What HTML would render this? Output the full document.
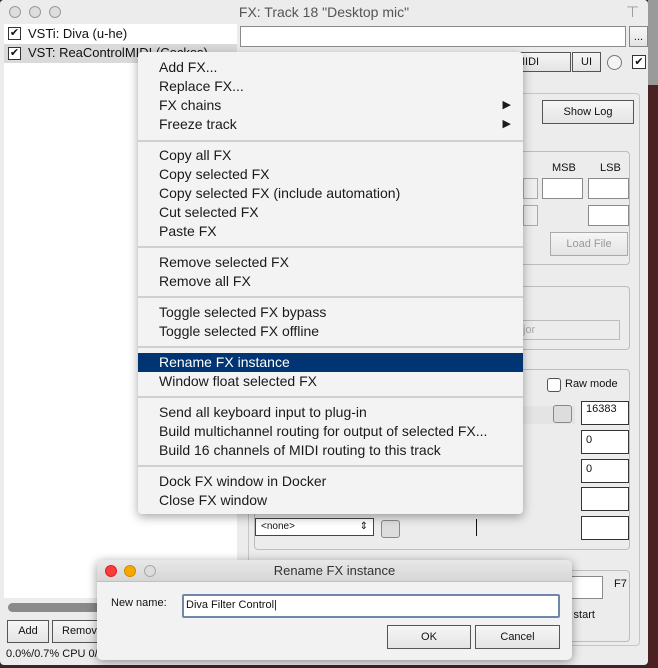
<!DOCTYPE html>
<html><head><style>
*{box-sizing:border-box;margin:0;padding:0}
body{width:658px;height:668px;overflow:hidden;background:#3a2626;font-family:"Liberation Sans",sans-serif;font-size:12px;color:#111;position:relative}
.a{position:absolute}
.win{left:0;top:0;width:648px;height:665px;background:#ececec;border-radius:4px;overflow:hidden}
.tl{width:12px;height:12px;border-radius:50%;border:1px solid #9a9a9a;background:#ddd;top:6px}
.inp{background:#fff;border:1px solid #8a8a8a}
.btn{background:linear-gradient(#f6f6f6,#e4e4e4);border:1px solid #555;text-align:center;font-size:11px}
.grp{border:1px solid #bdbdbd;border-radius:4px}
.menu{left:138px;top:52px;width:385px;height:462px;background:#f3f3f3;border-radius:4px;box-shadow:0 3px 10px rgba(0,0,0,.35);font-size:14px;color:#1a1a1a}
.mi{position:absolute;left:21px;height:19px;line-height:19px;white-space:nowrap}
.sep{position:absolute;left:0;width:385px;height:2px;background:#d0d0d0}
.arr{position:absolute;right:12px;font-size:11px}
</style></head><body>
<div class="a" style="left:648px;top:0;width:10px;height:85px;background:#9a9a9a"></div>
<div class="a" style="left:648px;top:85px;width:10px;height:583px;background:#4a2222"></div>
<div class="a win">
 <div class="a" style="left:0;top:0;width:648px;height:24px;background:#ececec"></div>
 <div class="a tl" style="left:9px"></div><div class="a tl" style="left:29px"></div><div class="a tl" style="left:49px"></div>
 <div class="a" style="left:0;top:4px;width:648px;text-align:center;font-size:14px;color:#555">FX: Track 18 "Desktop mic"</div>
 <div class="a" style="left:626px;top:3px;color:#999;font-size:15px">⊤</div>
 <div class="a" style="left:4px;top:24px;width:233px;height:574px;background:#fff"></div>
 <div class="a" style="left:4px;top:44px;width:233px;height:19px;background:#dadada"></div>
 <div class="a" style="left:8px;top:27px;width:13px;height:13px;border:1px solid #333;background:#fff;font-size:11px;line-height:11px;text-align:center">✔</div>
 <div class="a" style="left:28px;top:26px;font-size:13px">VSTi: Diva (u-he)</div>
 <div class="a" style="left:8px;top:47px;width:13px;height:13px;border:1px solid #333;background:#fff;font-size:11px;line-height:11px;text-align:center">✔</div>
 <div class="a" style="left:28px;top:45px;font-size:13px">VST: ReaControlMIDI (Cockos)</div>
 <div class="a" style="left:8px;top:603px;width:130px;height:9px;border-radius:5px;background:#8a8a8a"></div>
 <div class="a btn" style="left:7px;top:620px;width:42px;height:23px;line-height:21px">Add</div>
 <div class="a btn" style="left:52px;top:620px;width:60px;height:23px;line-height:21px;text-align:left;padding-left:9px">Remove</div>
 <div class="a" style="left:6px;top:648px;font-size:11px">0.0%/0.7% CPU 0/0 spls</div>
 <div class="a inp" style="left:240px;top:26px;width:386px;height:21px"></div>
 <div class="a btn" style="left:629px;top:26px;width:19px;height:21px;border-color:#888;line-height:20px">...</div>
 <div class="a btn" style="left:243px;top:52px;width:158px;height:20px"></div>
 <div class="a btn" style="left:405px;top:52px;width:19px;height:20px"></div>
 <div class="a btn" style="left:429px;top:52px;width:51px;height:20px"></div>
 <div class="a btn" style="left:484px;top:52px;width:87px;height:20px;line-height:18px">MIDI</div>
 <div class="a btn" style="left:572px;top:52px;width:29px;height:20px;line-height:18px">UI</div>
 <div class="a" style="left:607px;top:55px;width:15px;height:15px;border-radius:50%;border:1px solid #777;background:#f4f4f4"></div>
 <div class="a" style="left:632px;top:55px;width:14px;height:14px;border:1px solid #333;background:#fff;font-size:11px;line-height:12px;text-align:center">✔</div>
 <div class="a grp" style="left:248px;top:93px;width:392px;height:553px;border-color:#c6c6c6"></div>
 <div class="a btn" style="left:542px;top:100px;width:92px;height:24px;line-height:22px">Show Log</div>
 <div class="a grp" style="left:256px;top:151px;width:374px;height:114px"></div>
 <div class="a" style="left:552px;top:162px;font-size:11px">MSB</div><div class="a" style="left:600px;top:162px;font-size:11px">LSB</div>
 <div class="a inp" style="left:542px;top:178px;width:41px;height:21px"></div>
 <div class="a inp" style="left:588px;top:178px;width:41px;height:21px"></div>
 <div class="a inp" style="left:588px;top:205px;width:41px;height:21px"></div>
 <div class="a" style="left:523px;top:178px;width:15px;height:21px;border:1px solid #aaa;background:#eee"></div>
 <div class="a" style="left:523px;top:205px;width:15px;height:21px;border:1px solid #aaa;background:#eee"></div>
 <div class="a btn" style="left:550px;top:232px;width:78px;height:24px;line-height:22px;border-color:#aaa;color:#999">Load File</div>
 <div class="a grp" style="left:256px;top:286px;width:374px;height:64px"></div>
 <div class="a" style="left:500px;top:320px;width:120px;height:20px;border:1px solid #bbb;color:#aaa;font-size:11px;line-height:18px;padding-left:22px">jor</div>
 <div class="a grp" style="left:254px;top:369px;width:376px;height:181px"></div>
 <div class="a" style="left:547px;top:378px;width:14px;height:14px;border:1px solid #555;border-radius:3px;background:#fff"></div>
 <div class="a" style="left:565px;top:378px;font-size:11px">Raw mode</div>
 <div class="a" style="left:380px;top:406px;width:195px;height:18px;background:#e4e4e4"></div>
 <div class="a" style="left:553px;top:405px;width:19px;height:18px;border:1px solid #888;border-radius:3px;background:#ddd"></div>
 <div class="a inp" style="left:581px;top:401px;width:48px;height:24px;border-color:#333;font-size:11px;padding:1px 4px">16383</div>
 <div class="a inp" style="left:581px;top:430px;width:48px;height:24px;border-color:#333;font-size:11px;padding:3px 4px">0</div>
 <div class="a inp" style="left:581px;top:459px;width:48px;height:24px;border-color:#333;font-size:11px;padding:3px 4px">0</div>
 <div class="a inp" style="left:581px;top:487px;width:48px;height:24px;border-color:#333"></div>
 <div class="a inp" style="left:581px;top:516px;width:48px;height:24px;border-color:#333"></div>
 <div class="a inp" style="left:255px;top:518px;width:119px;height:18px;border-color:#444;font-size:10px;padding:2px 5px">&lt;none&gt;<span style="float:right">⇕</span></div>
 <div class="a" style="left:381px;top:520px;width:19px;height:18px;border:1px solid #888;border-radius:3px;background:#ddd"></div>
 <div class="a" style="left:476px;top:519px;width:1px;height:17px;background:#111"></div>
 <div class="a grp" style="left:254px;top:570px;width:376px;height:72px"></div>
 <div class="a inp" style="left:560px;top:576px;width:43px;height:23px"></div>
 <div class="a" style="left:614px;top:578px;font-size:11px">F7</div>
 <div class="a" style="left:565px;top:609px;font-size:11px">k start</div>
</div>
<div class="a menu">
 <div class="mi" style="top:6px">Add FX...</div>
 <div class="mi" style="top:25px">Replace FX...</div>
 <div class="mi" style="top:44px;width:352px">FX chains<span class="arr" style="right:0">▶</span></div>
 <div class="mi" style="top:63px;width:352px">Freeze track<span class="arr" style="right:0">▶</span></div>
 <div class="sep" style="top:88px"></div>
 <div class="mi" style="top:94px">Copy all FX</div>
 <div class="mi" style="top:113px">Copy selected FX</div>
 <div class="mi" style="top:132px">Copy selected FX (include automation)</div>
 <div class="mi" style="top:151px">Cut selected FX</div>
 <div class="mi" style="top:170px">Paste FX</div>
 <div class="sep" style="top:194px"></div>
 <div class="mi" style="top:201px">Remove selected FX</div>
 <div class="mi" style="top:220px">Remove all FX</div>
 <div class="sep" style="top:244px"></div>
 <div class="mi" style="top:251px">Toggle selected FX bypass</div>
 <div class="mi" style="top:270px">Toggle selected FX offline</div>
 <div class="sep" style="top:294px"></div>
 <div class="a" style="left:0;top:301px;width:385px;height:19px;background:#003473"></div>
 <div class="mi" style="top:301px;color:#fff">Rename FX instance</div>
 <div class="mi" style="top:320px">Window float selected FX</div>
 <div class="sep" style="top:344px"></div>
 <div class="mi" style="top:351px">Send all keyboard input to plug-in</div>
 <div class="mi" style="top:370px">Build multichannel routing for output of selected FX...</div>
 <div class="mi" style="top:389px">Build 16 channels of MIDI routing to this track</div>
 <div class="sep" style="top:413px"></div>
 <div class="mi" style="top:420px">Dock FX window in Docker</div>
 <div class="mi" style="top:439px">Close FX window</div>
</div>
<div class="a" style="left:97px;top:560px;width:475px;height:100px;background:#f2f2f2;border-radius:5px;box-shadow:0 2px 10px rgba(0,0,0,.4);overflow:hidden">
 <div class="a" style="left:0;top:0;width:475px;height:22px;background:linear-gradient(#e8e8e8,#d6d6d6);border-bottom:1px solid #c0c0c0"></div>
 <div class="a" style="left:8px;top:5px;width:12px;height:12px;border-radius:50%;background:#fc3b3b;border:1px solid #d22"></div>
 <div class="a" style="left:27px;top:5px;width:12px;height:12px;border-radius:50%;background:#f5a800;border:1px solid #d08a00"></div>
 <div class="a" style="left:47px;top:5px;width:12px;height:12px;border-radius:50%;background:#ddd;border:1px solid #aaa"></div>
 <div class="a" style="left:0;top:3px;width:475px;text-align:center;font-size:13px;color:#333">Rename FX instance</div>
 <div class="a" style="left:14px;top:37px;font-size:11px">New name:</div>
 <div class="a" style="left:85px;top:34px;width:378px;height:24px;background:#fff;border:2px solid #6f88aa;border-radius:2px;font-size:11px;padding:3px 2px">Diva Filter Control|</div>
 <div class="a btn" style="left:290px;top:65px;width:84px;height:24px;line-height:22px">OK</div>
 <div class="a btn" style="left:378px;top:65px;width:85px;height:24px;line-height:22px">Cancel</div>
</div>
</body></html>
